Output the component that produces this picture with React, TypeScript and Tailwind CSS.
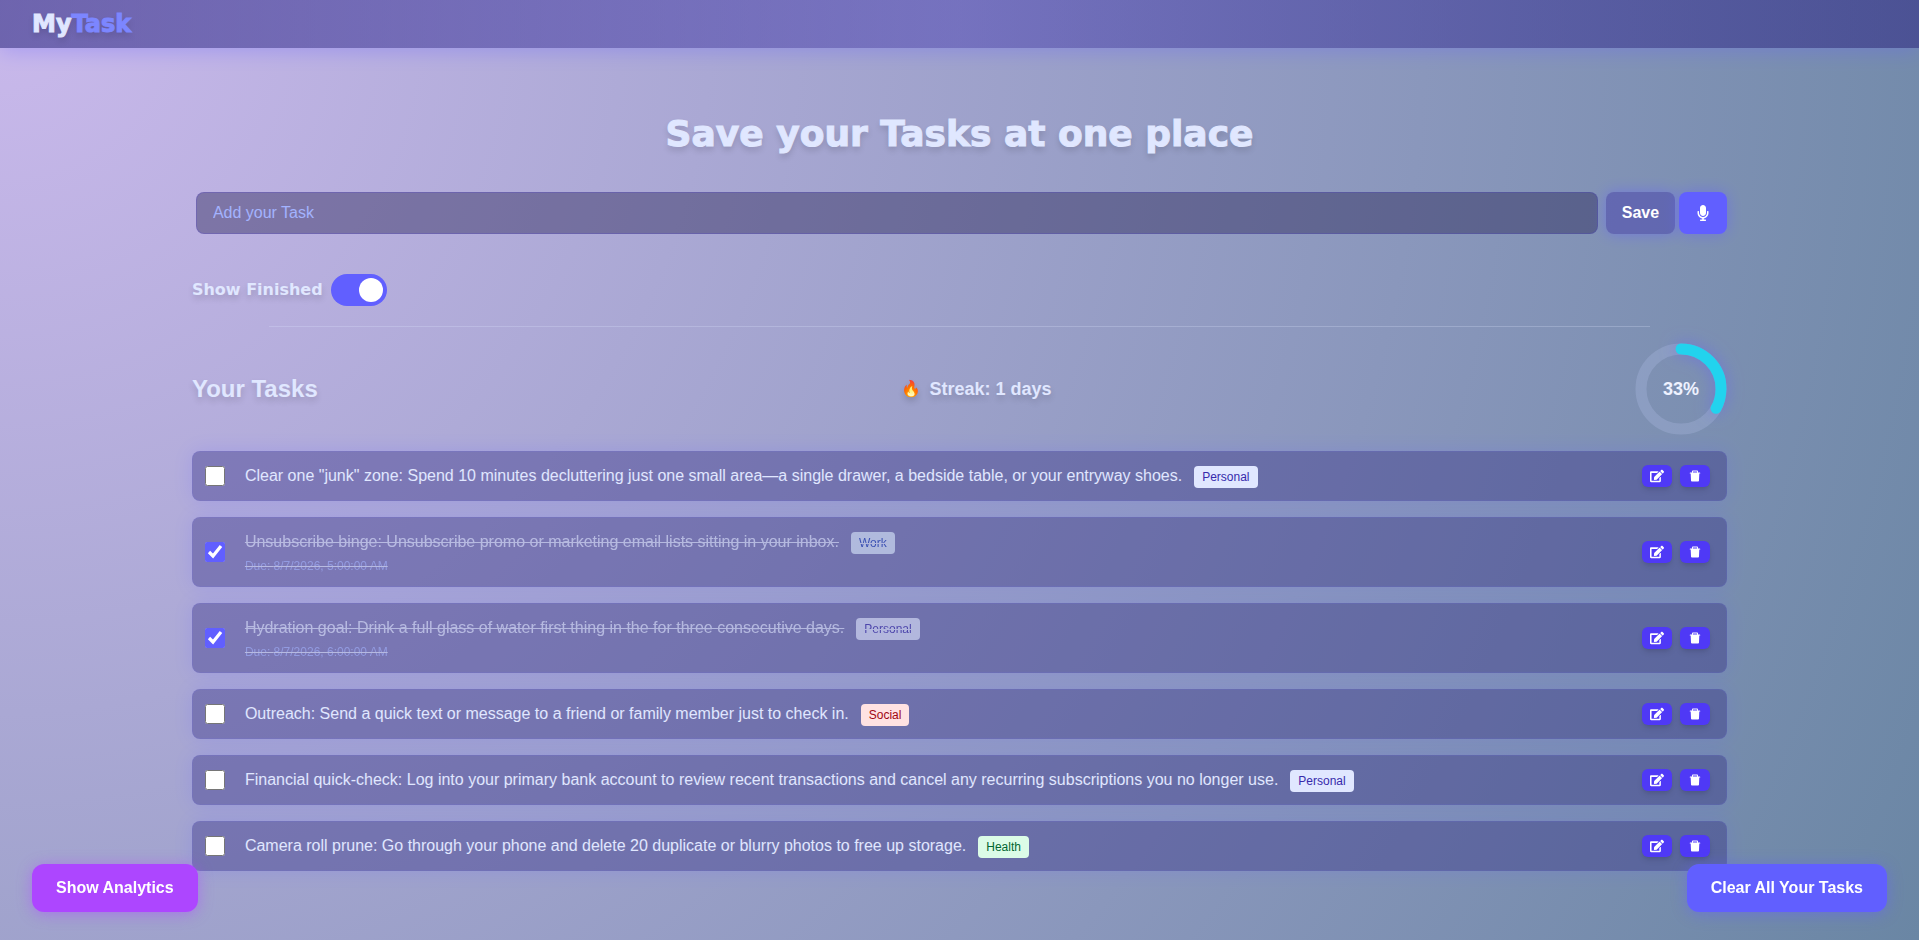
import { useState } from "react";
import { AiFillDelete } from "react-icons/ai";
import { FaEdit, FaMicrophone } from "react-icons/fa";

interface Task {
  id: number;
  text: string;
  category: "Personal" | "Work" | "Social" | "Health";
  due?: string;
  done: boolean;
}

const initialTasks: Task[] = [
  {
    id: 1,
    text: 'Clear one "junk" zone: Spend 10 minutes decluttering just one small area—a single drawer, a bedside table, or your entryway shoes.',
    category: "Personal",
    done: false,
  },
  {
    id: 2,
    text: "Unsubscribe binge: Unsubscribe promo or marketing email lists sitting in your inbox.",
    category: "Work",
    due: "8/7/2026, 5:00:00 AM",
    done: true,
  },
  {
    id: 3,
    text: "Hydration goal: Drink a full glass of water first thing in the for three consecutive days.",
    category: "Personal",
    due: "8/7/2026, 6:00:00 AM",
    done: true,
  },
  {
    id: 4,
    text: "Outreach: Send a quick text or message to a friend or family member just to check in.",
    category: "Social",
    done: false,
  },
  {
    id: 5,
    text: "Financial quick-check: Log into your primary bank account to review recent transactions and cancel any recurring subscriptions you no longer use.",
    category: "Personal",
    done: false,
  },
  {
    id: 6,
    text: "Camera roll prune: Go through your phone and delete 20 duplicate or blurry photos to free up storage.",
    category: "Health",
    done: false,
  },
];

const badgeColors = {
  Personal: "bg-indigo-100 text-indigo-800",
  Work: "bg-blue-100 text-blue-800",
  Social: "bg-red-100 text-red-800",
  Health: "bg-green-100 text-green-800",
};

function Navbar() {
  return (
    <nav className="flex h-12 items-center bg-linear-to-r from-indigo-900/60 via-indigo-800/40 to-indigo-900/60 px-8 shadow-[0_4px_20px] shadow-indigo-500/30">
      <span className="font-['DejaVu_Sans',sans-serif] text-2xl font-black text-indigo-100 text-shadow-[0_4px_6px_rgba(0,0,0,0.15)] [-webkit-text-stroke:1px_currentColor]">
        My<span className="text-indigo-400">Task</span>
      </span>
    </nav>
  );
}

function ProgressRing({ percent }: { percent: number }) {
  const radius = 40;
  const length = 2 * Math.PI * radius;
  return (
    <div className="relative flex size-[92px] items-center justify-center">
      <svg viewBox="0 0 92 92" className="absolute inset-0 -rotate-90 overflow-visible">
        <circle cx="46" cy="46" r={radius} fill="none" stroke="rgba(199,210,255,0.2)" strokeWidth="11" />
        <circle
          cx="46"
          cy="46"
          r={radius}
          fill="none"
          stroke="#22d3ee"
          strokeWidth="11"
          strokeLinecap="round"
          strokeDasharray={length}
          strokeDashoffset={length * (1 - percent / 100)}
          className="drop-shadow-[0_0_8px_rgba(97,95,255,0.5)]"
        />
      </svg>
      <span className="relative text-lg font-bold text-indigo-50">{percent}%</span>
    </div>
  );
}

function TaskItem({
  task,
  onToggle,
  onDelete,
}: {
  task: Task;
  onToggle: () => void;
  onDelete: () => void;
}) {
  return (
    <li className="flex items-center justify-between rounded-lg border border-indigo-500/10 bg-indigo-900/40 py-3 pr-4 pl-3 shadow-[0_0_20px] shadow-indigo-500/20">
      <div className="flex items-center gap-5">
        <input
          type="checkbox"
          id={`task-${task.id}`}
          checked={task.done}
          onChange={onToggle}
          className="size-5 accent-indigo-500"
        />
        <label
          htmlFor={`task-${task.id}`}
          className={task.done ? "text-indigo-100 line-through opacity-60" : "text-indigo-100"}
        >
          <span className="flex items-center gap-3">
            {task.text}
            <span className={`mt-px rounded-sm px-2 py-[3px] text-xs ${badgeColors[task.category]}`}>
              {task.category}
            </span>
          </span>
          {task.due && <span className="mt-1 block text-xs text-indigo-300">Due: {task.due}</span>}
        </label>
      </div>
      <div className="flex gap-2">
        <button aria-label="Edit task" className="rounded-md bg-indigo-600 px-2 py-1 text-sm text-white shadow-md">
          <FaEdit />
        </button>
        <button
          aria-label="Delete task"
          onClick={onDelete}
          className="rounded-md bg-indigo-600 px-2 py-1 text-sm text-white shadow-md"
        >
          <AiFillDelete />
        </button>
      </div>
    </li>
  );
}

export default function App() {
  const [tasks, setTasks] = useState<Task[]>(initialTasks);
  const [text, setText] = useState("");
  const [showFinished, setShowFinished] = useState(true);

  const finished = tasks.filter((t) => t.done).length;
  const percent = tasks.length ? Math.round((finished / tasks.length) * 100) : 0;

  const saveTask = () => {
    if (!text.trim()) return;
    setTasks([...tasks, { id: Date.now(), text, category: "Personal", done: false }]);
    setText("");
  };
  const toggleTask = (id: number) => {
    setTasks(tasks.map((t) => (t.id === id ? { ...t, done: !t.done } : t)));
  };

  return (
    <div className="min-h-screen bg-[radial-gradient(circle_at_top_left,#cab9ec,#6a86a4)] font-['Liberation_Sans',Arial,sans-serif]">
      <Navbar />
      <main className="mx-auto w-4/5 pt-[66px]">
        <h1 className="text-center font-['DejaVu_Sans',sans-serif] text-4xl font-black text-indigo-100 text-shadow-[0_4px_6px_rgba(0,0,0,0.15)] [-webkit-text-stroke:1px_currentColor]">
          Save your Tasks at one place
        </h1>

        <div className="mt-[38px] flex pl-1">
          <input
            type="text"
            aria-label="Add your Task"
            placeholder="Add your Task"
            value={text}
            onChange={(e) => setText(e.target.value)}
            className="min-w-0 flex-1 rounded-lg border border-indigo-700/20 bg-indigo-950/40 px-4 py-2 text-indigo-100 placeholder-indigo-300"
          />
          <button
            onClick={saveTask}
            className="ml-2 rounded-lg bg-indigo-800/40 px-4 py-2 font-bold text-white shadow-[0_0_15px] shadow-indigo-500/50"
          >
            Save
          </button>
          <button
            aria-label="Voice input"
            className="ml-1 rounded-lg bg-indigo-500 px-4 py-2 text-white shadow-[0_0_15px] shadow-indigo-500/50"
          >
            <FaMicrophone />
          </button>
        </div>

        <label className="mt-10 flex w-fit items-center gap-2">
          <span className="font-['DejaVu_Sans',sans-serif] font-black text-indigo-100 text-shadow-[0_4px_6px_rgba(0,0,0,0.15)]">
            Show Finished
          </span>
          <input
            type="checkbox"
            checked={showFinished}
            onChange={() => setShowFinished(!showFinished)}
            className="peer sr-only"
          />
          <span className="flex h-8 w-14 rounded-full bg-indigo-300 p-1 peer-checked:justify-end peer-checked:bg-indigo-500">
            <span className="size-6 rounded-full bg-white" />
          </span>
        </label>

        <div className="mx-auto mt-5 h-px w-9/10 bg-indigo-100/25" />

        <div className="mt-4 flex items-center justify-between">
          <h2 className="text-2xl font-bold text-indigo-100 text-shadow-[0_4px_6px_rgba(0,0,0,0.15)]">Your Tasks</h2>
          <div className="flex items-center gap-2 text-lg font-bold text-indigo-100 text-shadow-[0_4px_6px_rgba(0,0,0,0.15)]">
            <span className="text-base">🔥</span>
            Streak: 1 days
          </div>
          <ProgressRing percent={percent} />
        </div>

        <ul className="mt-4 flex flex-col gap-4">
          {tasks
            .filter((t) => showFinished || !t.done)
            .map((task) => (
              <TaskItem
                key={task.id}
                task={task}
                onToggle={() => toggleTask(task.id)}
                onDelete={() => setTasks(tasks.filter((t) => t.id !== task.id))}
              />
            ))}
        </ul>
      </main>

      <button className="fixed bottom-7 left-8 rounded-xl bg-purple-500 px-6 py-3 font-bold text-white shadow-[0_2px_15px] shadow-purple-500/50">
        Show Analytics
      </button>
      <button
        onClick={() => setTasks([])}
        className="fixed right-8 bottom-7 rounded-xl bg-indigo-500 px-6 py-3 font-bold text-white shadow-[0_2px_15px] shadow-indigo-500/50"
      >
        Clear All Your Tasks
      </button>
    </div>
  );
}
